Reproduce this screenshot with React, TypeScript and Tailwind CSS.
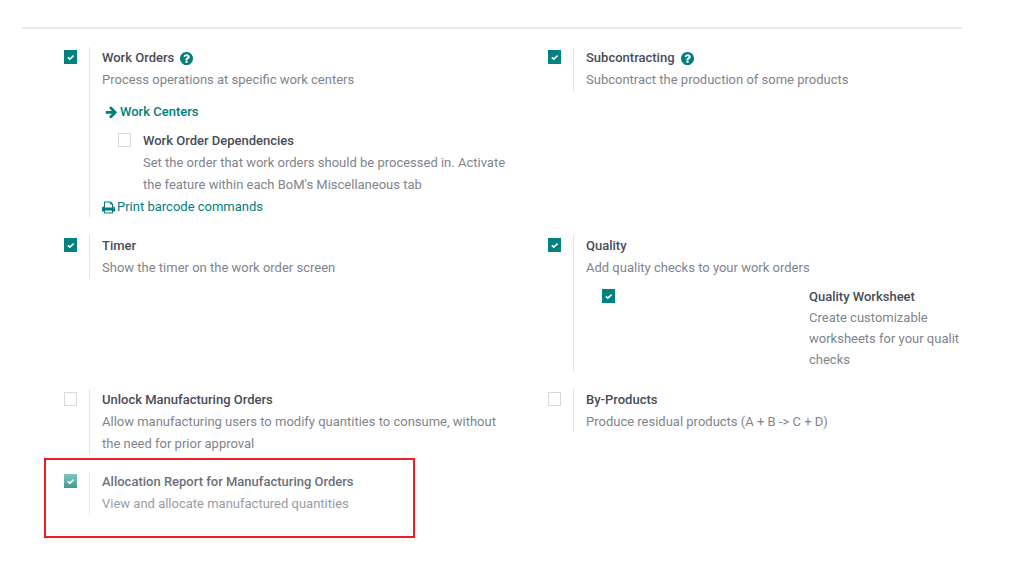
import type { ReactNode } from 'react';
import clsx from 'clsx';

type SettingProps = {
  id: string;
  title: string;
  description: string;
  checked?: boolean;
  help?: boolean;
  faded?: boolean;
  children?: ReactNode;
};

export default function App() {
  return (
    <main className="min-h-screen bg-white pt-[27px] pl-[22px] pr-[62px] font-['Roboto',sans-serif] text-[13px] leading-[22px] text-[#80848d]">
      <section className="overflow-hidden border-t-2 border-[#ebebeb] pb-8">
        <div className="mt-[18px] ml-[42px] grid grid-cols-[484fr_414fr] gap-y-[17px]">
          <Setting
            id="work-orders"
            title="Work Orders"
            description="Process operations at specific work centers"
            checked
            help
          >
            <a
              href="#work-centers"
              className="mt-[10px] ml-[3px] flex items-center gap-0.5 font-medium text-[#017e7c]"
            >
              <ArrowIcon />
              Work Centers
            </a>
            <div className="mt-[7px] ml-4 flex items-start">
              <Checkbox id="dependencies" />
              <SettingText
                id="dependencies"
                title="Work Order Dependencies"
                description="Set the order that work orders should be processed in. Activate the feature within each BoM's Miscellaneous tab"
                className="ml-3 w-[374px]"
              />
            </div>
            <a
              href="#barcodes"
              className="flex items-center gap-0.5 text-[#017e7c]"
            >
              <PrintIcon />
              Print barcode commands
            </a>
          </Setting>
          <Setting
            id="subcontracting"
            title="Subcontracting"
            description="Subcontract the production of some products"
            checked
            help
          />
          <Setting
            id="timer"
            title="Timer"
            description="Show the timer on the work order screen"
            checked
          />
          <Setting
            id="quality"
            title="Quality"
            description="Add quality checks to your work orders"
            checked
          >
            <div className="mt-[7px] mb-0.5 ml-4 flex items-start leading-[21px]">
              <Checkbox id="worksheet" checked />
              <SettingText
                id="worksheet"
                title="Quality Worksheet"
                description="Create customizable worksheets for your qualit checks"
                className="ml-[194px] w-[160px] shrink-0"
              />
            </div>
          </Setting>
          <Setting
            id="unlock"
            title="Unlock Manufacturing Orders"
            description="Allow manufacturing users to modify quantities to consume, without the need for prior approval"
          />
          <Setting
            id="by-products"
            title="By-Products"
            description="Produce residual products (A + B -> C + D)"
          />
        </div>
        <div className="mt-[3px] ml-[22px] w-[371px] border-2 border-[#ee1c25] pt-[11px] pb-[21px] pl-[18px]">
          <Setting
            id="allocation"
            title="Allocation Report for Manufacturing Orders"
            description="View and allocate manufactured quantities"
            checked
            faded
          />
        </div>
      </section>
    </main>
  );
}

const Setting = ({
  id,
  title,
  description,
  checked,
  help,
  faded,
  children,
}: SettingProps) => (
  <div className={clsx('flex min-w-0 items-start', faded && 'opacity-80')}>
    <Checkbox id={id} checked={checked} faded={faded} />
    <div className="ml-3 min-w-0 flex-1 border-l border-[#e2e3e5] pl-3">
      <SettingText
        id={id}
        title={title}
        description={description}
        help={help}
        className="max-w-[408px]"
      />
      {children}
    </div>
  </div>
);

const SettingText = ({
  id,
  title,
  description,
  help,
  className,
}: {
  id: string;
  title: string;
  description: string;
  help?: boolean;
  className?: string;
}) => (
  <div className={className}>
    <div className="flex items-center gap-1.5">
      <label htmlFor={id} className="font-medium text-[#484c58]">
        {title}
      </label>
      {help && (
        <a href={`#${id}-help`} aria-label={`${title} help`}>
          <HelpIcon />
        </a>
      )}
    </div>
    <p>{description}</p>
  </div>
);

const Checkbox = ({
  id,
  checked,
  faded,
}: {
  id: string;
  checked?: boolean;
  faded?: boolean;
}) => (
  <span className="mt-[3px] grid shrink-0 place-items-center">
    <input
      id={id}
      type="checkbox"
      defaultChecked={checked}
      className={clsx(
        'peer col-start-1 row-start-1 h-[14px] w-[13px] appearance-none border border-[#d5d8dc] bg-white checked:border-0 checked:bg-[#01827f]',
        faded &&
          'checked:bg-linear-to-b checked:from-[#5db8b4] checked:to-[#01827f]'
      )}
    />
    <svg
      viewBox="0 0 13 14"
      className="pointer-events-none col-start-1 row-start-1 hidden h-[14px] w-[13px] peer-checked:block"
      fill="none"
      stroke="white"
      strokeWidth="1.7"
    >
      <path d="M3.8 7.4 5.8 9.2 9.6 5.6" />
    </svg>
  </span>
);

const HelpIcon = () => (
  <svg viewBox="128 128 1536 1536" className="size-[13px] fill-[#017e7c]">
    <path d="M1024 1376v-192q0-14-9-23t-23-9h-192q-14 0-23 9t-9 23v192q0 14 9 23t23 9h192q14 0 23-9t9-23zm256-672q0-88-55.5-163t-138.5-116-170-41q-243 0-371 213-15 24 8 42l132 100q7 6 19 6 16 0 25-12 53-68 86-92 34-24 86-24 48 0 85.5 26t37.5 59q0 38-20 61t-68 45q-63 28-115.5 86.5t-52.5 125.5v36q0 14 9 23t23 9h192q14 0 23-9t9-23q0-19 21.5-49.5t54.5-49.5q32-18 49-28.5t46-35 44.5-48 28-60.5 12.5-81zm384 192q0 209-103 385.5t-279.5 279.5-385.5 103-385.5-103-279.5-279.5-103-385.5 103-385.5 279.5-279.5 385.5-103 385.5 103 279.5 279.5 103 385.5z" />
  </svg>
);

const ArrowIcon = () => (
  <svg viewBox="128 128 1536 1700" className="size-[13px] fill-current">
    <path d="M1600 960q0 54-37 91l-651 651q-39 37-91 37-51 0-90-37l-75-75q-38-38-38-91t38-91l293-293h-704q-52 0-84.5-37.5t-32.5-90.5v-128q0-53 32.5-90.5t84.5-37.5h704l-293-294q-38-36-38-90t38-90l75-75q38-38 90-38 53 0 91 38l651 651q37 35 37 90z" />
  </svg>
);

const PrintIcon = () => (
  <svg viewBox="64 64 1664 1664" className="size-[13px] fill-current">
    <path d="M448 1536h896v-256h-896v256zm0-640h896v-384h-160q-40 0-68-28t-28-68v-160h-640v640zm1152 64q0-26-19-45t-45-19-45 19-19 45 19 45 45 19 45-19 19-45zm128 0v416q0 13-9.5 22.5t-22.5 9.5h-224v160q0 40-28 68t-68 28h-960q-40 0-68-28t-28-68v-160h-224q-13 0-22.5-9.5t-9.5-22.5v-416q0-79 56.5-135.5t135.5-56.5h64v-544q0-40 28-68t68-28h672q40 0 88 20t76 48l152 152q28 28 48 76t20 88v256h64q79 0 135.5 56.5t56.5 135.5z" />
  </svg>
);
